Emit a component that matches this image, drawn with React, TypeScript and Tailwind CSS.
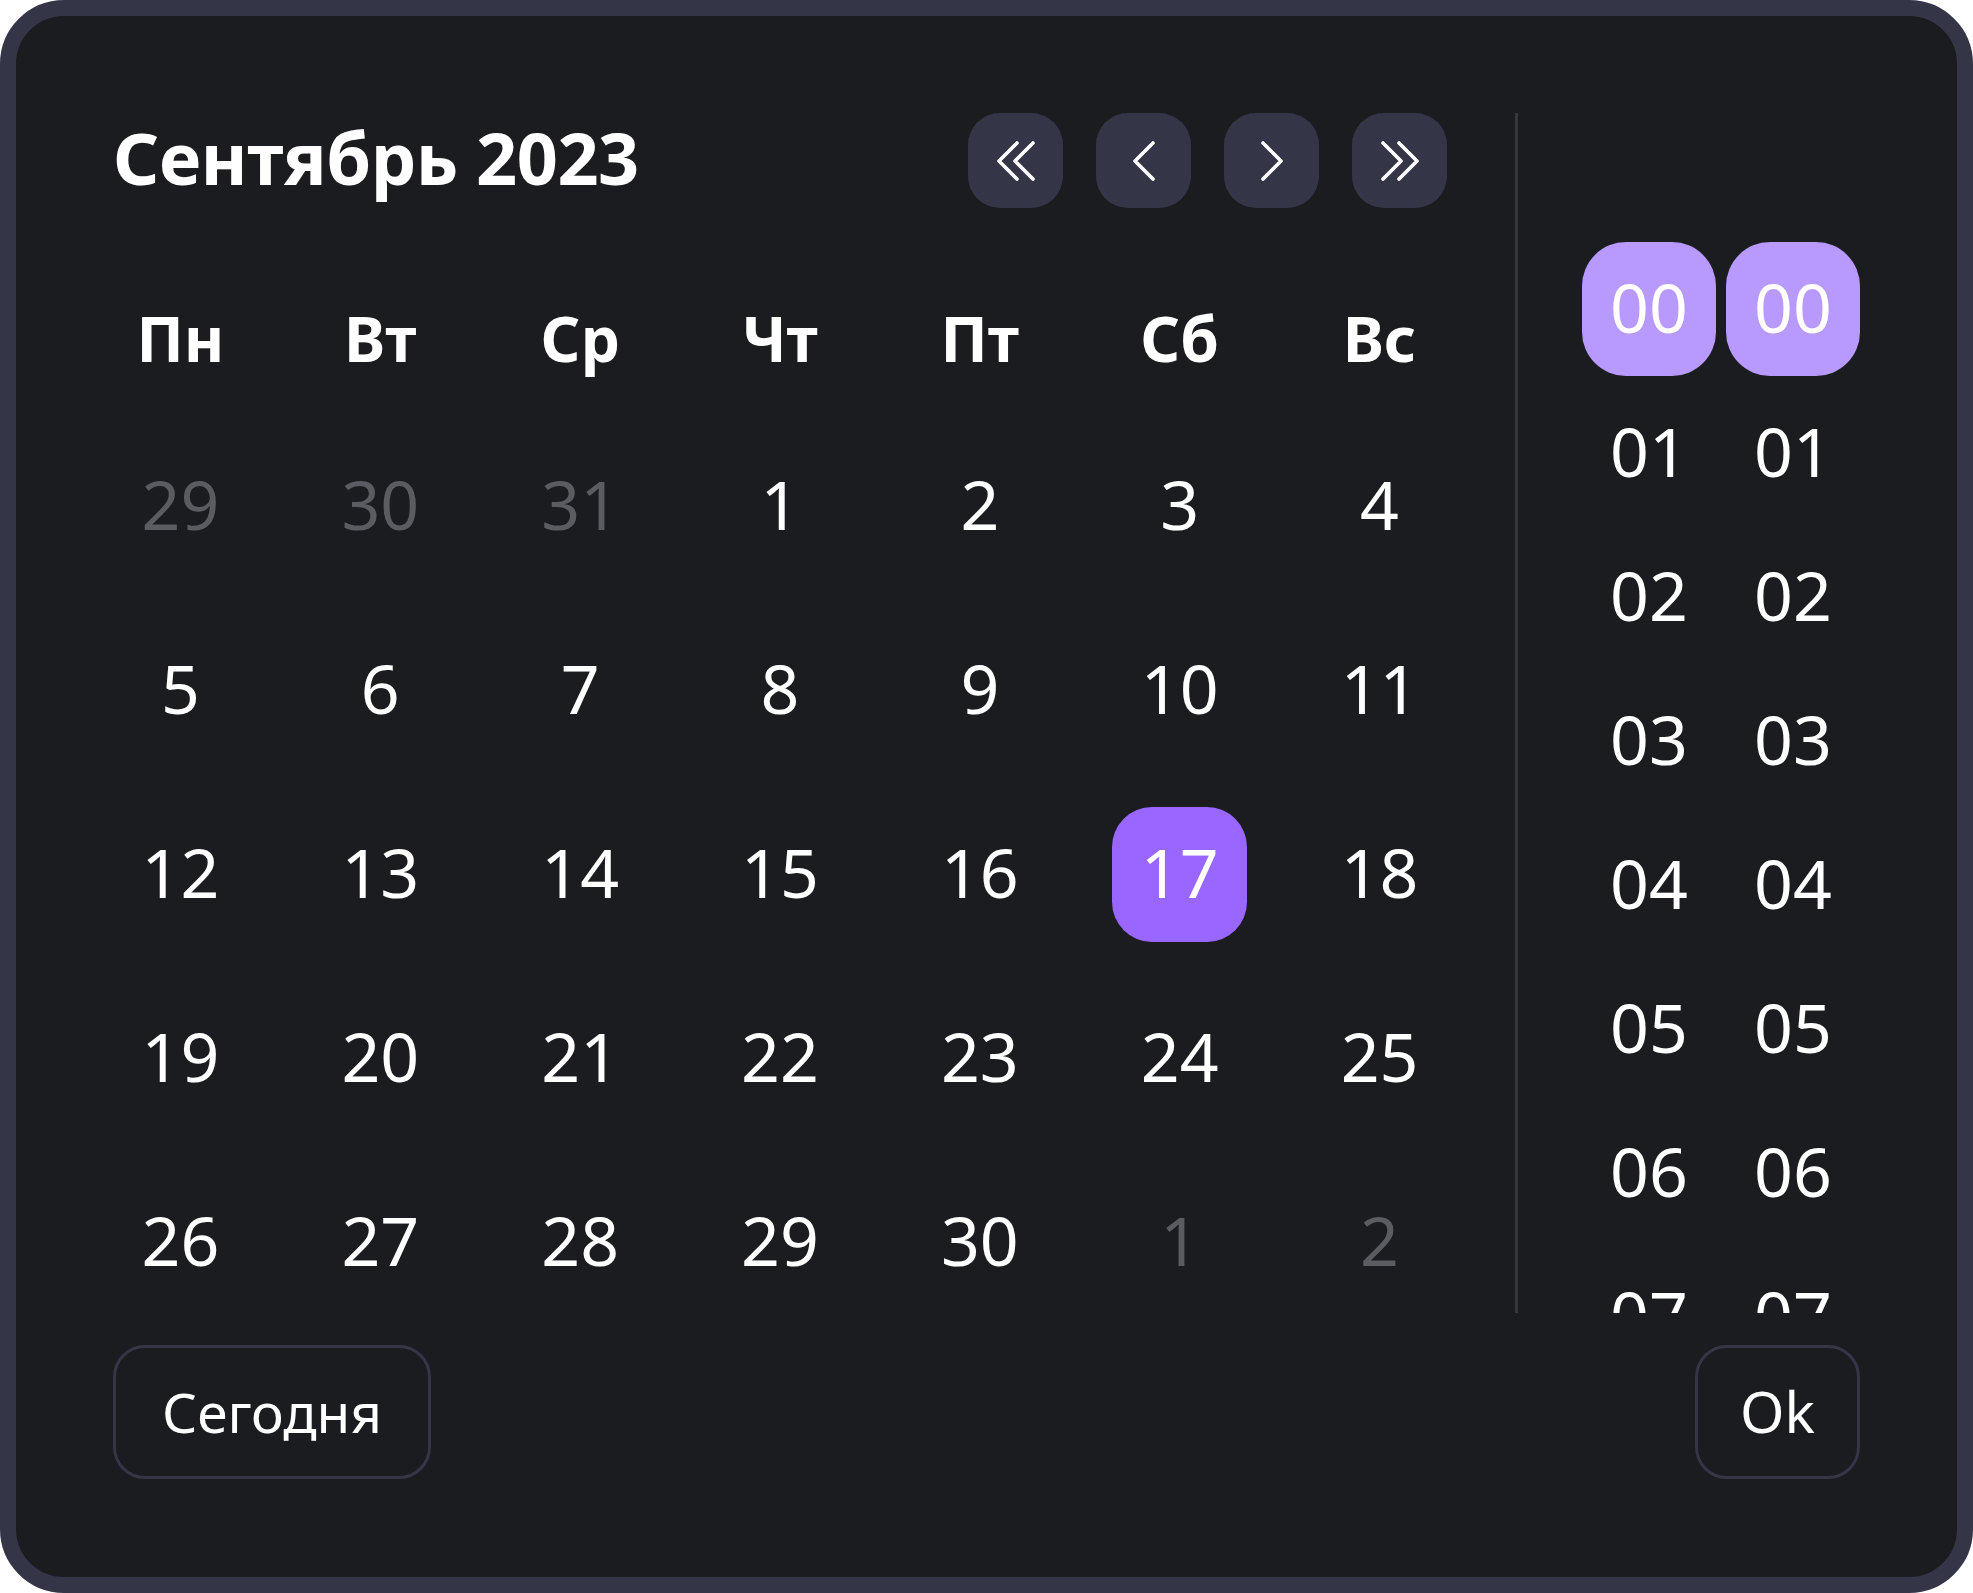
import React from 'react';

const weekDays = ['Пн', 'Вт', 'Ср', 'Чт', 'Пт', 'Сб', 'Вс'];

interface DayCell {
  day: number;
  muted?: boolean;
}

// сентябрь 2023, неделя с понедельника
const days: DayCell[] = [
  { day: 29, muted: true },
  { day: 30, muted: true },
  { day: 31, muted: true },
  ...Array.from({ length: 30 }, (_, i) => ({ day: i + 1 })),
  { day: 1, muted: true },
  { day: 2, muted: true },
];

const hours = Array.from({ length: 9 }, (_, i) => String(i).padStart(2, '0'));

function Chevron({ dir, double }: { dir: 'left' | 'right'; double?: boolean }) {
  const flip = dir === 'right' ? 'scale(-1,1) translate(-40,0)' : undefined;
  return (
    <svg width="40" height="40" viewBox="0 0 40 40" fill="none">
      <g transform={flip} stroke="white" strokeWidth="3.6" strokeLinecap="round" strokeLinejoin="round">
        {double ? (
          <>
            <path d="M21 2 L3 20 L21 38" />
            <path d="M37 2 L19 20 L37 38" />
          </>
        ) : (
          <path d="M29 2 L11 20 L29 38" />
        )}
      </g>
    </svg>
  );
}

function NavButton({ dir, double }: { dir: 'left' | 'right'; double?: boolean }) {
  return (
    <button className="flex h-[95px] w-[95px] items-center justify-center rounded-[32px] bg-[#343648]">
      <Chevron dir={dir} double={double} />
    </button>
  );
}

export default function App() {
  const selectedDay = 17;

  return (
    <div className="h-screen w-screen bg-white">
      <div className="flex h-full w-full flex-col rounded-[64px] border-[16px] border-[#343648] bg-[#1b1c20] p-[97px] font-['Noto_Sans',sans-serif] text-white">
        <div className="flex h-[1200px]">
          {/* календарь */}
          <div className="flex w-[1334px] flex-col">
            <div className="flex h-[95px] items-center justify-between">
              <h1 className="pb-[8px] text-[72px] font-bold leading-none tracking-[-0.5px]">Сентябрь 2023</h1>
              <div className="flex gap-[33px]">
                <NavButton dir="left" double />
                <NavButton dir="left" />
                <NavButton dir="right" />
                <NavButton dir="right" double />
              </div>
            </div>

            <div className="mt-[64px] grid grid-cols-7 gap-x-[65px]">
              {weekDays.map((d) => (
                <div key={d} className="flex h-[135px] items-center justify-center pb-[2px] text-[62px] font-bold">
                  {d}
                </div>
              ))}
            </div>

            <div className="mt-[32px] grid grid-cols-7 gap-x-[65px] gap-y-[49px]">
              {days.map((c, i) => {
                const active = !c.muted && c.day === selectedDay;
                return (
                  <div
                    key={i}
                    className={`flex h-[135px] items-center justify-center rounded-[40px] pb-[5px] text-[68px] ${
                      active ? 'bg-[#9966ff] text-white' : c.muted ? 'text-[#5b5c61]' : 'text-white'
                    }`}
                  >
                    {c.day}
                  </div>
                );
              })}
            </div>
          </div>

          <div className="ml-[68px] w-[3px] bg-[#36373c]" />

          {/* время */}
          <div className="ml-[64px] flex gap-[10px] overflow-hidden pt-[129px]">
            {[0, 1].map((col) => (
              <div key={col} className="flex flex-col gap-[10px]">
                {hours.map((h, i) => (
                  <div
                    key={h}
                    className={`flex h-[134px] w-[134px] shrink-0 items-center justify-center rounded-[44px] pb-[5px] text-[68px] ${
                      i === 0 ? 'bg-[#b899fd]' : ''
                    }`}
                  >
                    {h}
                  </div>
                ))}
              </div>
            ))}
          </div>
        </div>

        <div className="mt-[32px] flex justify-between">
          <button className="flex h-[134px] w-[318px] items-center justify-center rounded-[32px] border-[3px] border-[#343648] pb-[2px] text-[55px] leading-none">
            Сегодня
          </button>
          <button className="flex h-[134px] w-[165px] items-center justify-center rounded-[32px] border-[3px] border-[#343648] pb-[2px] text-[57px] leading-none">
            Ok
          </button>
        </div>
      </div>
    </div>
  );
}
